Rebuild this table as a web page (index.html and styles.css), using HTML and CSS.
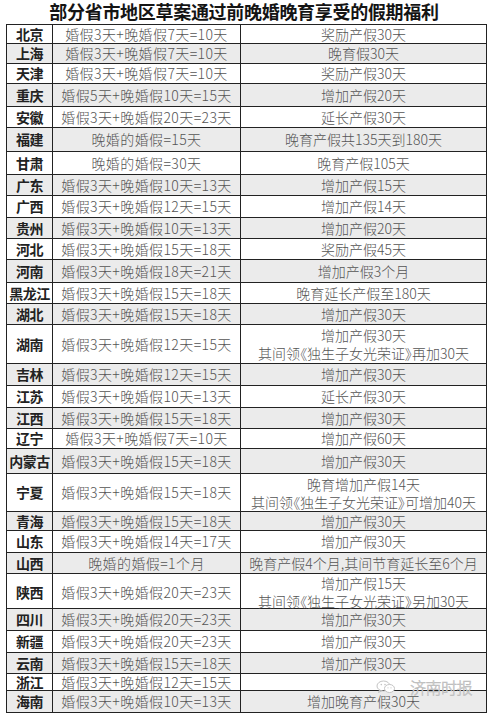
FILE: index.html
```html
<!DOCTYPE html>
<html lang="zh-CN">
<head>
<meta charset="utf-8">
<title>部分省市地区草案通过前晚婚晚育享受的假期福利</title>
<link rel="stylesheet" href="styles.css">
</head>
<body>
<div class="page">
  <h1 class="title">部分省市地区草案通过前晚婚晚育享受的假期福利</h1>
  <div class="table">
    <div class="row h19"><div class="c prov">北京</div><div class="c mid">婚假3天+晚婚假7天=10天</div><div class="c right">奖励产假30天</div></div>
    <div class="row alt h20"><div class="c prov">上海</div><div class="c mid">婚假3天+晚婚假7天=10天</div><div class="c right">晚育假30天</div></div>
    <div class="row h20"><div class="c prov">天津</div><div class="c mid">婚假3天+晚婚假7天=10天</div><div class="c right">奖励产假30天</div></div>
    <div class="row alt h23"><div class="c prov">重庆</div><div class="c mid">婚假5天+晚婚假10天=15天</div><div class="c right">增加产假20天</div></div>
    <div class="row h21"><div class="c prov">安徽</div><div class="c mid">婚假3天+晚婚假20天=23天</div><div class="c right">延长产假30天</div></div>
    <div class="row alt h24"><div class="c prov">福建</div><div class="c mid">晚婚的婚假=15天</div><div class="c right">晚育产假共135天到180天</div></div>
    <div class="row h23"><div class="c prov">甘肃</div><div class="c mid">晚婚的婚假=30天</div><div class="c right">晚育产假105天</div></div>
    <div class="row alt h21"><div class="c prov">广东</div><div class="c mid">婚假3天+晚婚假10天=13天</div><div class="c right">增加产假15天</div></div>
    <div class="row h22"><div class="c prov">广西</div><div class="c mid">婚假3天+晚婚假12天=15天</div><div class="c right">增加产假14天</div></div>
    <div class="row alt h21"><div class="c prov">贵州</div><div class="c mid">婚假3天+晚婚假10天=13天</div><div class="c right">增加产假20天</div></div>
    <div class="row h21"><div class="c prov">河北</div><div class="c mid">婚假3天+晚婚假15天=18天</div><div class="c right">奖励产假45天</div></div>
    <div class="row alt h23"><div class="c prov">河南</div><div class="c mid">婚假3天+晚婚假18天=21天</div><div class="c right">增加产假3个月</div></div>
    <div class="row h21"><div class="c prov">黑龙江</div><div class="c mid">婚假3天+晚婚假15天=18天</div><div class="c right">晚育延长产假至180天</div></div>
    <div class="row alt h21"><div class="c prov">湖北</div><div class="c mid">婚假3天+晚婚假15天=18天</div><div class="c right">增加产假30天</div></div>
    <div class="row h39"><div class="c prov">湖南</div><div class="c mid">婚假3天+晚婚假12天=15天</div><div class="c right"><span class="two">增加产假30天<br>其间领《独生子女光荣证》再加30天</span></div></div>
    <div class="row alt h22"><div class="c prov">吉林</div><div class="c mid">婚假3天+晚婚假12天=15天</div><div class="c right">增加产假30天</div></div>
    <div class="row h22"><div class="c prov">江苏</div><div class="c mid">婚假3天+晚婚假10天=13天</div><div class="c right">延长产假30天</div></div>
    <div class="row alt h21"><div class="c prov">江西</div><div class="c mid">婚假3天+晚婚假15天=18天</div><div class="c right">增加产假30天</div></div>
    <div class="row h20"><div class="c prov">辽宁</div><div class="c mid">婚假3天+晚婚假7天=10天</div><div class="c right">增加产假60天</div></div>
    <div class="row alt h25"><div class="c prov">内蒙古</div><div class="c mid">婚假3天+晚婚假15天=18天</div><div class="c right">增加产假30天</div></div>
    <div class="row h38"><div class="c prov">宁夏</div><div class="c mid">婚假3天+晚婚假15天=18天</div><div class="c right"><span class="two">晚育增加产假14天<br>其间领《独生子女光荣证》可增加40天</span></div></div>
    <div class="row alt h19"><div class="c prov">青海</div><div class="c mid">婚假3天+晚婚假15天=18天</div><div class="c right">增加产假30天</div></div>
    <div class="row h22"><div class="c prov">山东</div><div class="c mid">婚假3天+晚婚假14天=17天</div><div class="c right">增加产假30天</div></div>
    <div class="row alt h21"><div class="c prov">山西</div><div class="c mid">晚婚的婚假=1个月</div><div class="c right">晚育产假4个月,其间节育延长至6个月</div></div>
    <div class="row h35"><div class="c prov">陕西</div><div class="c mid">婚假3天+晚婚假20天=23天</div><div class="c right"><span class="two">增加产假15天<br>其间领《独生子女光荣证》另加30天</span></div></div>
    <div class="row alt h22"><div class="c prov">四川</div><div class="c mid">婚假3天+晚婚假20天=23天</div><div class="c right">增加产假30天</div></div>
    <div class="row h22"><div class="c prov">新疆</div><div class="c mid">婚假3天+晚婚假20天=23天</div><div class="c right">增加产假30天</div></div>
    <div class="row alt h21"><div class="c prov">云南</div><div class="c mid">婚假3天+晚婚假15天=18天</div><div class="c right">增加产假30天</div></div>
    <div class="row h17"><div class="c prov">浙江</div><div class="c mid">婚假3天+晚婚假12天=15天</div><div class="c right"></div></div>
    <div class="row alt h22"><div class="c prov">海南</div><div class="c mid">婚假3天+晚婚假10天=13天</div><div class="c right">增加晚育产假30天</div></div>
  </div>
  <div class="watermark">
    <svg class="wx" width="20" height="14" viewBox="0 0 20 14" aria-hidden="true">
      <ellipse cx="7.5" cy="6" rx="6.5" ry="5" fill="none" stroke="#c4c4c4" stroke-width="1"/>
      <path d="M3.5 10 L2.5 12.5 L6 10.8" fill="none" stroke="#c4c4c4" stroke-width="1"/>
      <ellipse cx="13.5" cy="8.5" rx="5" ry="4" fill="#fff" stroke="#c4c4c4" stroke-width="1"/>
      <circle cx="5.3" cy="4.6" r="0.8" fill="#c4c4c4"/>
      <circle cx="9" cy="4.6" r="0.8" fill="#c4c4c4"/>
      <circle cx="12" cy="7.8" r="0.6" fill="#c4c4c4"/>
      <circle cx="15" cy="7.8" r="0.6" fill="#c4c4c4"/>
    </svg>
    <span class="wm-text">济南时报</span>
  </div>
</div>
</body>
</html>
```
FILE: styles.css
```css
html, body {
  margin: 0;
  padding: 0;
  background: #ffffff;
}

.page {
  position: relative;
  width: 488px;
  height: 715px;
  font-family: "Noto Sans CJK SC", "Liberation Sans", sans-serif;
}

.title {
  margin: 0;
  height: 24px;
  line-height: 22px;
  font-size: 18px;
  font-weight: 700;
  letter-spacing: -0.3px;
  text-align: center;
  color: #141414;
  overflow: visible;
}

.table {
  margin-left: 6px;
  width: 481px;
  border-top: 1px solid #222;
  border-left: 1px solid #222;
  box-sizing: border-box;
}

.row {
  display: grid;
  grid-template-columns: 46px 188px 246px;
  border-bottom: 1px solid #222;
  box-sizing: border-box;
  background: #ffffff;
}

.row.alt {
  background: #ebebeb;
}

.c {
  display: flex;
  align-items: center;
  justify-content: center;
  border-right: 1px solid #222;
  text-align: center;
  white-space: nowrap;
  line-height: 17px;
}

.prov {
  font-size: 14px;
  font-weight: 700;
  color: #222;
  letter-spacing: -0.5px;
}

.mid {
  font-size: 14px;
  font-weight: 300;
  color: #555;
  letter-spacing: 0.4px;
}

.right {
  font-size: 14px;
  font-weight: 300;
  color: #555;
  font-feature-settings: "palt";
}

.two {
  display: block;
  line-height: 18px;
}

.h17 { height: 17px; }
.h19 { height: 19px; }
.h20 { height: 20px; }
.h21 { height: 21px; }
.h22 { height: 22px; }
.h23 { height: 23px; }
.h24 { height: 24px; }
.h25 { height: 25px; }
.h35 { height: 35px; }
.h38 { height: 38px; }
.h39 { height: 39px; }

.watermark {
  position: absolute;
  left: 376px;
  top: 678px;
  display: flex;
  align-items: center;
  gap: 14px;
}

.wm-text {
  font-size: 16px;
  font-weight: 300;
  color: #e4e4e4;
  -webkit-text-stroke: 0.5px #b8b8b8;
  letter-spacing: -0.5px;
  line-height: 18px;
}
```
